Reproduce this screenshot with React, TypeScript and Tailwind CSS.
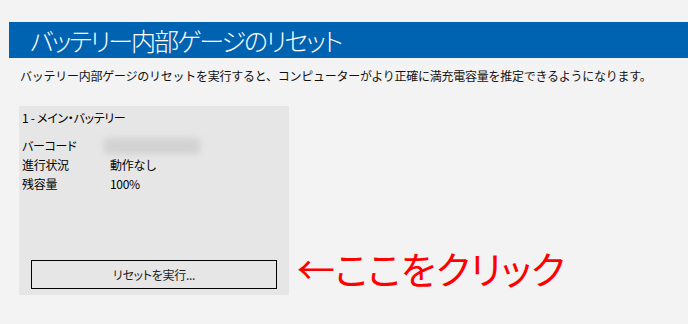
export default function App() {
  return (
    <div
      className="h-[324px] w-[688px] overflow-hidden bg-[#f3f3f3] text-[#000]"
      style={{ fontFamily: '"Noto Sans CJK JP", "Noto Sans", sans-serif' }}
    >
      <div className="h-[22px]" />
      <div className="ml-[9px] flex h-[36px] items-center bg-[#0063b1] pl-[21px]">
        <h1 className="text-[25px] font-light leading-none tracking-[-2px] text-white [font-feature-settings:'palt']">
          バッテリー内部ゲージのリセット
        </h1>
      </div>

      <p className="ml-[20px] mt-[10px] text-[12px] leading-[16px] tracking-[-0.25px] text-[#111]">
        バッテリー内部ゲージのリセットを実行すると、コンピューターがより正確に満充電容量を推定できるようになります。
      </p>

      <div className="mt-[22px] flex items-end">
        <div className="ml-[19px] flex h-[189px] w-[270px] flex-col bg-[#e6e6e6] px-[3px] pt-[4px]">
          <div className="text-[12px] leading-[16px] tracking-[-0.3px] [font-feature-settings:'palt']">
            1 - メイン・バッテリー
          </div>
          <div className="mt-[10px] grid grid-cols-[88px_1fr] text-[12px] leading-[19px] tracking-[-0.3px]">
            <span className="[font-feature-settings:'palt']">バーコード</span>
            <span className="flex items-center">
              <span className="ml-[-6px] h-[16px] w-[96px] rounded-[4px] bg-[#d2d2d2] blur-[3px]" />
            </span>
            <span>進行状況</span>
            <span>動作なし</span>
            <span>残容量</span>
            <span>100%</span>
          </div>
          <div className="flex-1" />
          <button
            type="button"
            className="mb-[6px] ml-[9px] h-[29px] w-[246px] border-[1.5px] border-black bg-[#e6e6e6] text-[12px] tracking-[-0.3px] text-[#222] [font-feature-settings:'palt']"
          >
            リセットを実行...
          </button>
        </div>
        <div className="mb-[8px] ml-[8px] text-[38px] font-normal leading-none text-[#ff0000] [font-feature-settings:'palt']">
          ←ここをクリック
        </div>
      </div>
    </div>
  );
}
